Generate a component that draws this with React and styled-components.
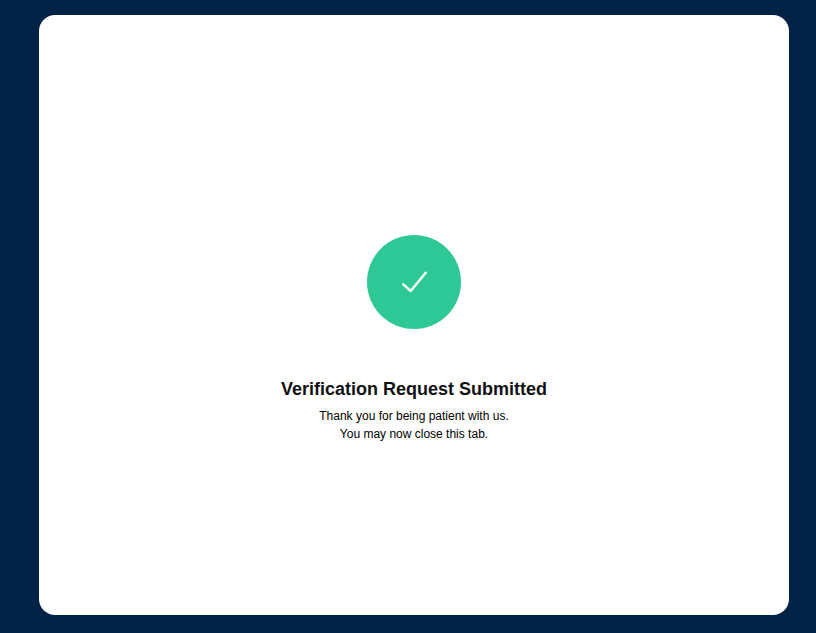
import React from "react";
import styled, { createGlobalStyle } from "styled-components";

const Global = createGlobalStyle`
  html, body { margin: 0; padding: 0; height: 100%; overflow: hidden; background: #002244; }
  body { font-family: "Liberation Sans", Arial, sans-serif; }
`;

const Page = styled.main`
  box-sizing: border-box;
  width: 816px;
  height: 633px;
  padding: 15px 27px 18px 39px;
  background: #002244;
`;

const Card = styled.section`
  width: 750px;
  height: 600px;
  border-radius: 16px;
  background: #ffffff;
  display: flex;
  flex-direction: column;
  align-items: center;
  padding-top: 220px;
  box-sizing: border-box;
`;

const Badge = styled.div`
  width: 94px;
  height: 94px;
  border-radius: 50%;
  background: #2dc896;
  display: flex;
  align-items: center;
  justify-content: center;
`;

const Title = styled.h1`
  margin: 49px 0 0;
  font-size: 18px;
  line-height: 22px;
  font-weight: 700;
  color: #111111;
`;

const Message = styled.p`
  margin: 7px 0 0;
  font-size: 12px;
  line-height: 18px;
  text-align: center;
  color: #000000;
`;

export default function App() {
  return (
    <>
      <Global />
      <Page>
        <Card>
          <Badge>
            <svg width="94" height="94" viewBox="0 0 94 94" fill="none">
              <path d="M36.3 49.3 L43.7 56 L58.7 37.7" stroke="#fff" strokeWidth="2.4" strokeLinecap="round" strokeLinejoin="round" />
            </svg>
          </Badge>
          <Title>Verification Request Submitted</Title>
          <Message>
            Thank you for being patient with us.
            <br />
            You may now close this tab.
          </Message>
        </Card>
      </Page>
    </>
  );
}
